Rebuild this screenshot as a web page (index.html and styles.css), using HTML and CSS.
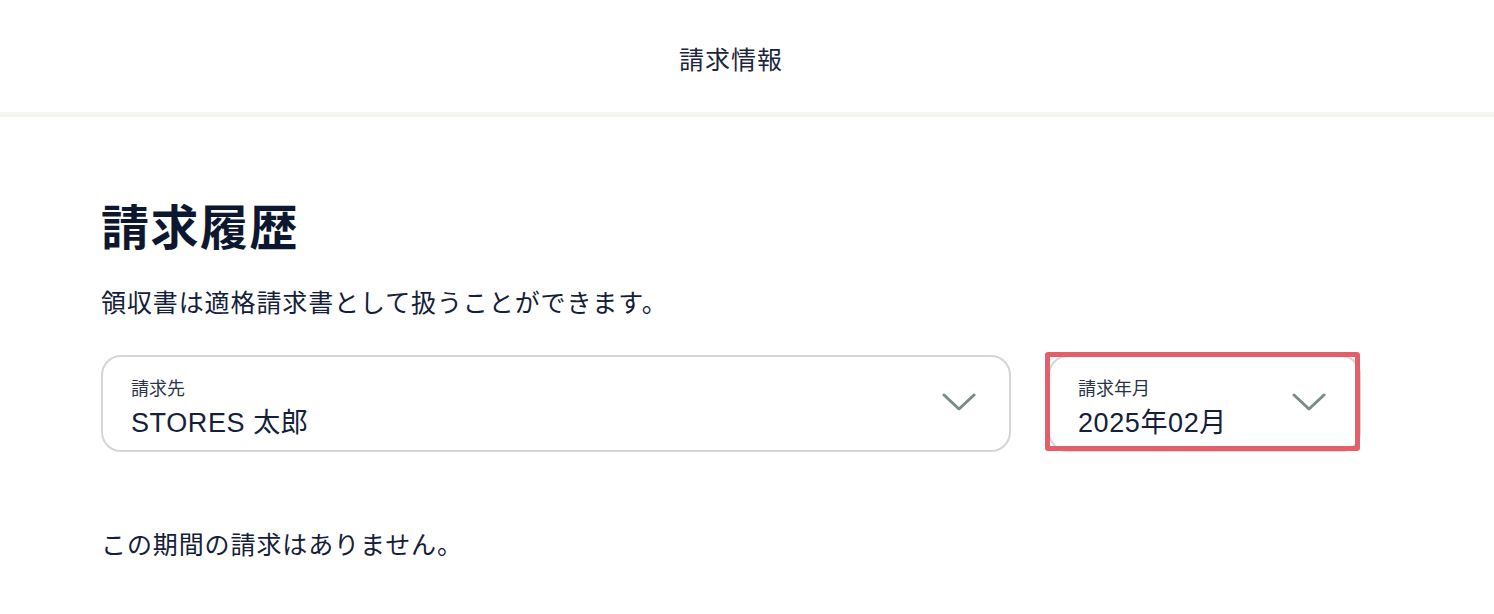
FILE: index.html
```html
<!DOCTYPE html>
<html lang="ja">
<head>
<meta charset="utf-8">
<title>請求情報</title>
<link rel="stylesheet" href="styles.css">
</head>
<body>
<header class="topbar">
  <h1 class="topbar-title">請求情報</h1>
</header>
<main class="content">
  <h2 class="page-heading">請求履歴</h2>
  <p class="lead">領収書は適格請求書として扱うことができます。</p>
  <div class="filters">
    <div class="select select-wide">
      <div class="select-text">
        <span class="select-label">請求先</span>
        <span class="select-value">STORES 太郎</span>
      </div>
      <svg class="chevron" width="34" height="18" viewBox="0 0 34 18"><path d="M2 2 L17 16 L32 2" fill="none" stroke="#7b8b86" stroke-width="3" stroke-linecap="round" stroke-linejoin="round"/></svg>
    </div>
    <div class="select select-narrow">
      <div class="select-text">
        <span class="select-label">請求年月</span>
        <span class="select-value">2025年02月</span>
      </div>
      <svg class="chevron" width="34" height="18" viewBox="0 0 34 18"><path d="M2 2 L17 16 L32 2" fill="none" stroke="#7b8b86" stroke-width="3" stroke-linecap="round" stroke-linejoin="round"/></svg>
      <div class="highlight"></div>
    </div>
  </div>
  <p class="empty">この期間の請求はありません。</p>
</main>
</body>
</html>
```

FILE: styles.css
```css
* { box-sizing: border-box; }
html, body { margin: 0; padding: 0; background: #fff; }
body {
  font-family: "Noto Sans CJK JP", "Noto Sans", sans-serif;
  color: #14203a;
  width: 1494px;
  height: 614px;
  overflow: hidden;
}
.topbar {
  height: 117px;
  border-bottom: 5px solid #f3f3f0;
  display: flex;
  align-items: center;
  justify-content: center;
  padding: 4px 32px 0 0;
}
.topbar-title {
  margin: 0;
  font-size: 25px;
  font-weight: 400;
  letter-spacing: 1px;
  color: #1a2540;
}
.content {
  padding: 0 101px;
}
.page-heading {
  margin: 78px 0 0;
  font-size: 48px;
  line-height: 59px;
  font-weight: 700;
  letter-spacing: 1.5px;
  color: #0d1830;
}
.lead {
  margin: 28px 0 0;
  font-size: 25px;
  line-height: 39px;
  letter-spacing: 0.9px;
}
.filters {
  display: flex;
  gap: 37px;
  margin-top: 34px;
}
.select {
  position: relative;
  height: 97px;
  border: 2px solid #d3d6d3;
  border-radius: 20px;
  display: flex;
  align-items: center;
  justify-content: space-between;
  padding: 0 33px 0 28px;
  background: #fff;
}
.select-wide { width: 910px; }
.select-narrow { width: 313px; }
.select-text {
  display: flex;
  flex-direction: column;
  padding-top: 11px;
}
.select-label {
  font-size: 18px;
  line-height: 26px;
  color: #2a3346;
}
.select-value {
  margin-top: 2px;
  font-family: "Liberation Sans", "Noto Sans CJK JP", sans-serif;
  font-size: 27px;
  line-height: 42px;
  letter-spacing: 0.6px;
  color: #14203a;
}
.chevron { display: block; margin-top: -4px; }
.highlight {
  position: absolute;
  left: -5px;
  top: -5px;
  right: -1px;
  bottom: -1px;
  border: 5px solid #e3606a;
  border-radius: 3px;
  pointer-events: none;
}
.empty {
  margin: 72px 0 0;
  font-size: 25px;
  line-height: 39px;
  letter-spacing: 0.9px;
}
```
